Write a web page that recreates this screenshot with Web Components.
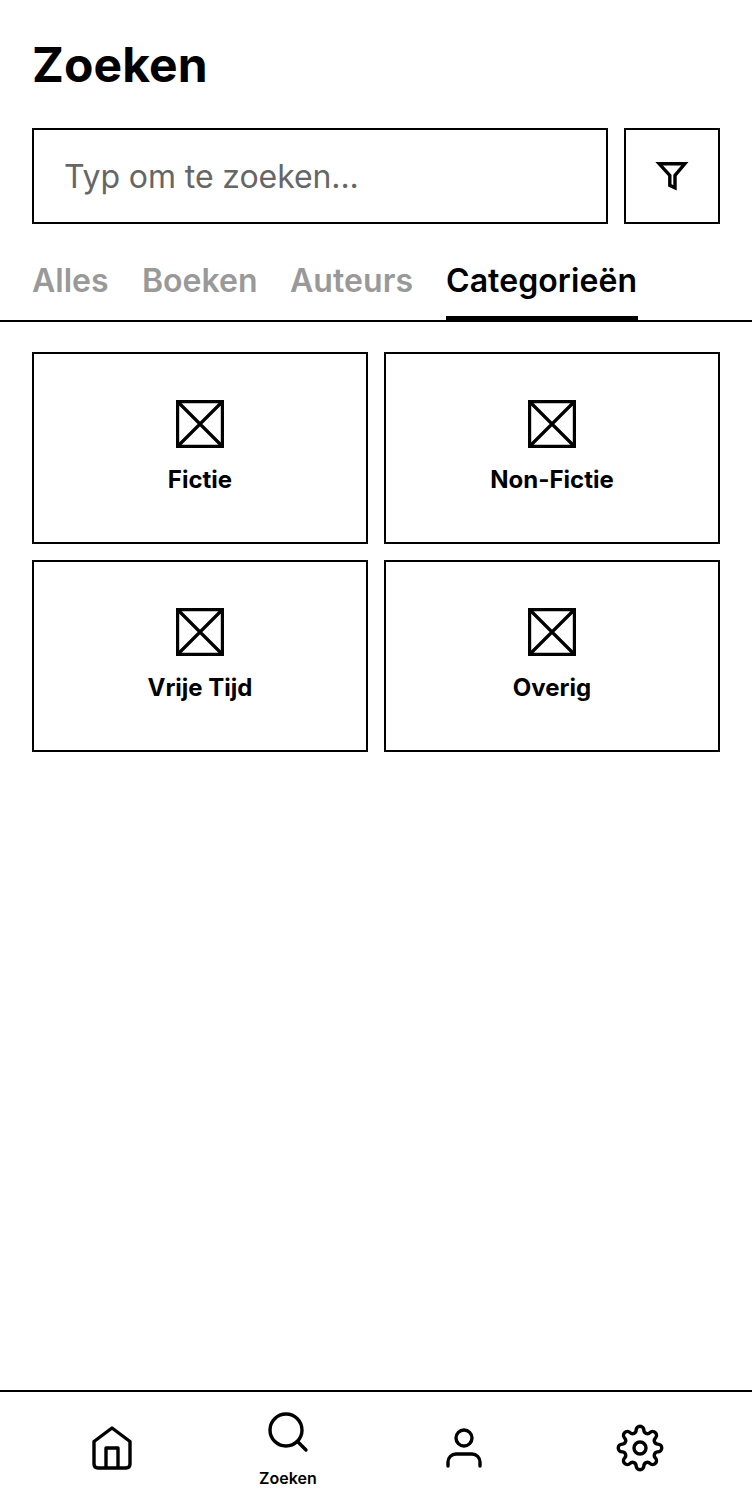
<!DOCTYPE html>
<html lang="nl">
<head>
<meta charset="utf-8">
<title>Zoeken</title>
<style>
html,body{margin:0;height:100%}
body{background:#fff;color:#000;font-family:Inter,"Liberation Sans",sans-serif}
</style>
</head>
<body>
<search-page></search-page>
<script>
const define = (name, html) => {
  const template = document.createElement('template');
  template.innerHTML = html;
  customElements.define(name, class extends HTMLElement {
    constructor() {
      super();
      this.attachShadow({ mode: 'open' }).append(template.content.cloneNode(true));
    }
  });
};

define('page-title', `<style>
:host{display:block;padding:33px 32px 0}
h1{margin:0;font-size:48px;line-height:64px;font-weight:700;letter-spacing:.1px}
</style><h1><slot></slot></h1>`);

define('search-bar', `<style>
:host{display:flex;gap:16px;padding:31px 32px 0}
.field,.filter{box-sizing:border-box;height:96px;border:2px solid #000;display:flex;align-items:center}
.field{flex:1;padding:1px 32px 0 30px;font-size:32px;letter-spacing:-.09px;color:#666}
.filter{width:96px;justify-content:center}
svg{display:block}
</style>
<div class="field"><slot></slot></div>
<div class="filter"><svg width="48" height="48" viewBox="0 0 48 48" fill="none" stroke="#000" stroke-width="3.4"><path d="M11.2 11.8H36.8L27 23.3V35.8L21.8 33.4V23.3Z"/></svg></div>`);

define('tab-list', `<style>
:host{display:flex;gap:32px;box-sizing:border-box;height:98px;padding:0 32px;border-bottom:2px solid #000}
</style><slot></slot>`);

define('tab-item', `<style>
:host{display:block;box-sizing:border-box;height:98px;padding-top:36px;font-size:32px;line-height:42px;font-weight:600;letter-spacing:.08px;color:#999}
:host([active]){color:#000;border-bottom:6px solid #000}
</style><slot></slot>`);

define('category-grid', `<style>
:host{display:grid;grid-template-columns:1fr 1fr;gap:16px;padding:30px 32px 0}
</style><slot></slot>`);

define('category-card', `<style>
:host{display:flex;flex-direction:column;align-items:center;box-sizing:border-box;height:192px;border:2px solid #000;padding-top:46px;font-size:24px;line-height:32px;font-weight:700}
svg{display:block;margin-bottom:16px}
</style>
<svg width="48" height="48" viewBox="0 0 48 48" fill="none" stroke="#000" stroke-width="3.2"><path d="M1.6 1.6H46.4V46.4H1.6ZM2 2L46 46M46 2L2 46"/></svg>
<slot></slot>`);

define('bottom-nav', `<style>
:host{display:grid;grid-template-columns:repeat(4,1fr);box-sizing:border-box;height:114px;margin-top:auto;padding:0 24px;border-top:2px solid #000}
</style><slot></slot>`);

define('nav-item', `<style>
:host{display:flex;flex-direction:column;align-items:center;justify-content:center;font-size:16px;line-height:20px;font-weight:600;letter-spacing:.05px}
::slotted(svg){display:block;fill:none;stroke:#000;stroke-width:3.4;stroke-linecap:round;stroke-linejoin:round}
:host([active]){gap:12px}
</style><slot name="icon"></slot><slot></slot>`);

define('search-page', `<style>
:host{display:flex;flex-direction:column;height:1504px}
tab-item:nth-child(1){width:78px;letter-spacing:0}
tab-item:nth-child(2){width:116px;letter-spacing:0}
tab-item:nth-child(3){width:124px}
tab-item:nth-child(4){width:192px}
</style>
<page-title>Zoeken</page-title>
<search-bar>Typ om te zoeken...</search-bar>
<tab-list>
  <tab-item>Alles</tab-item><tab-item>Boeken</tab-item><tab-item>Auteurs</tab-item><tab-item active>Categorieën</tab-item>
</tab-list>
<category-grid>
  <category-card>Fictie</category-card>
  <category-card>Non-Fictie</category-card>
  <category-card>Vrije Tijd</category-card>
  <category-card>Overig</category-card>
</category-grid>
<bottom-nav>
  <nav-item><svg slot="icon" width="48" height="48" viewBox="0 0 48 48"><path d="M24 4L42 17.5V40Q42 44 38 44H10Q6 44 6 40V17.5ZM18 44V24H30V44"/></svg></nav-item>
  <nav-item active><svg slot="icon" width="48" height="48" viewBox="0 0 48 48"><circle cx="22" cy="22" r="16"/><path d="M33.8 33.8L42 42"/></svg>Zoeken</nav-item>
  <nav-item><svg slot="icon" width="48" height="48" viewBox="0 0 48 48"><circle cx="24" cy="14" r="8"/><path d="M8 42V38A8 8 0 0 1 16 30H32A8 8 0 0 1 40 38V42"/></svg></nav-item>
  <nav-item><svg slot="icon" width="48" height="48" viewBox="-24 -24 48 48"><circle r="6"/><path d="M17.86 -3.9A3.9 3.9 0 0 1 17.86 3.9A3.45 3.45 0 0 0 15.39 9.87A3.9 3.9 0 0 1 9.87 15.39A3.45 3.45 0 0 0 3.9 17.86A3.9 3.9 0 0 1 -3.9 17.86A3.45 3.45 0 0 0 -9.87 15.39A3.9 3.9 0 0 1 -15.39 9.87A3.45 3.45 0 0 0 -17.86 3.9A3.9 3.9 0 0 1 -17.86 -3.9A3.45 3.45 0 0 0 -15.39 -9.87A3.9 3.9 0 0 1 -9.87 -15.39A3.45 3.45 0 0 0 -3.9 -17.86A3.9 3.9 0 0 1 3.9 -17.86A3.45 3.45 0 0 0 9.87 -15.39A3.9 3.9 0 0 1 15.39 -9.87A3.45 3.45 0 0 0 17.86 -3.9Z"/></svg></nav-item>
</bottom-nav>`);
</script>
</body>
</html>
